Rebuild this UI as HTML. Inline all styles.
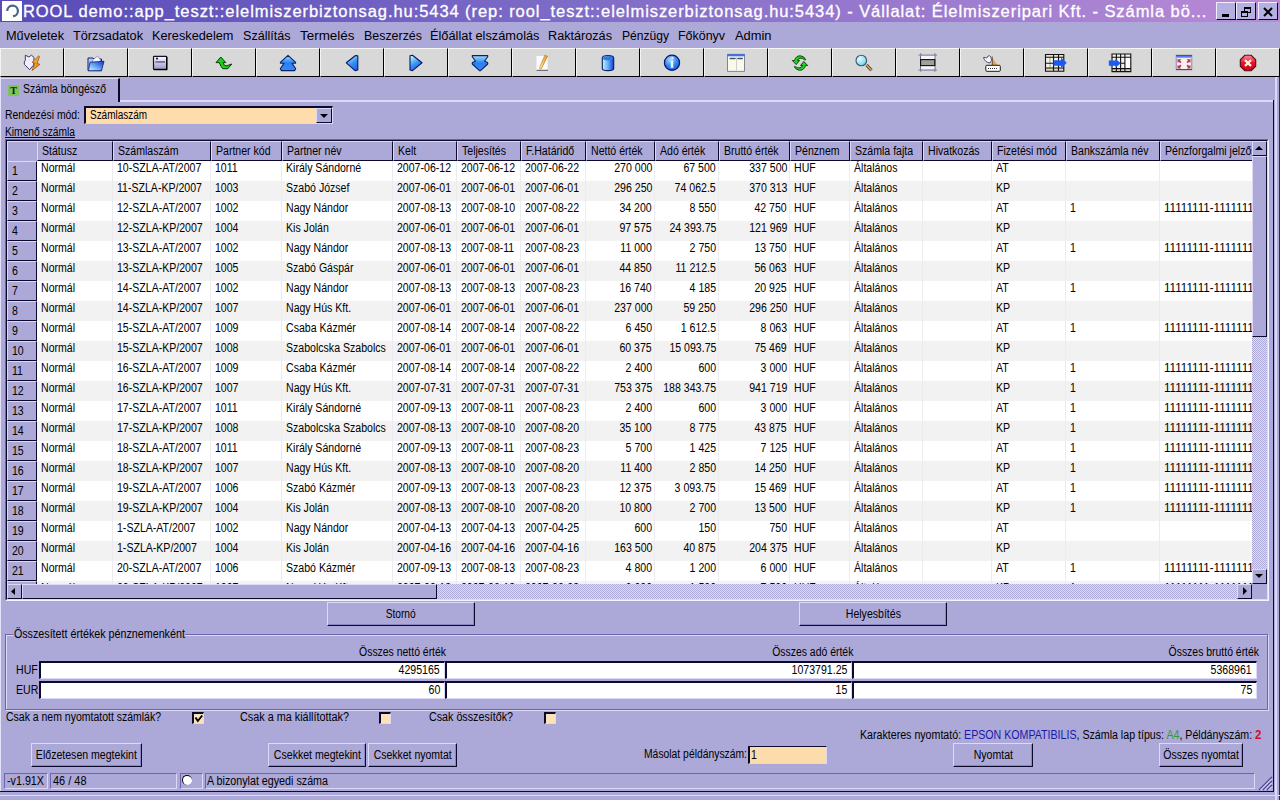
<!DOCTYPE html>
<html><head><meta charset="utf-8"><title>ROOL</title>
<style>
*{box-sizing:border-box}
html,body{margin:0;padding:0}
body{width:1280px;height:800px;overflow:hidden;position:relative;background:#aca8d8;font-family:"Liberation Sans",sans-serif;font-size:12px;color:#000}
.s{display:inline-block;transform:scaleX(var(--k,.88));transform-origin:0 0}
.r>.s{transform-origin:100% 0}
.btn{display:flex;justify-content:center}
.btn>.s{transform-origin:50% 0;flex:none}
.a{position:absolute}
.t{position:absolute;white-space:pre;line-height:13px}
.tb{position:absolute;top:48px;width:64px;height:29px;background:#d8d8d8;border-top:1px solid #f6f6f6;border-left:1px solid #f4f4f4;border-right:1px solid #000;border-bottom:1px solid #000}
.btn{position:absolute;background:#aca8d8;border-top:1px solid #dcd9f8;border-left:1px solid #dcd9f8;border-right:1px solid #0c0a2c;border-bottom:1px solid #0c0a2c;box-shadow:inset -1px -1px 0 #8a85c4;text-align:center;line-height:22px;white-space:pre}
.rh{position:absolute;left:7px;width:30px;height:20px;background:#aca8d8;border-top:1px solid #dcd9f8;border-left:1px solid #dcd9f8;border-bottom:1px solid #0c0a2c;border-right:1px solid #0c0a2c;line-height:19px;padding-left:4px}
.hc{position:absolute;top:141px;height:20px;background:#aca8d8;border-top:1px solid #dcd9f8;border-left:1px solid #dcd9f8;border-right:1px solid #0c0a2c;border-bottom:1px solid #0c0a2c;line-height:18px;padding-left:4px;white-space:pre;overflow:hidden}
.c{position:absolute;top:0;height:20px;line-height:inherit;white-space:pre;overflow:hidden;border-right:1px solid #ececf0}
.dither{background-color:#dedcf6;background-image:linear-gradient(45deg,#aca8d8 25%,transparent 25%,transparent 75%,#aca8d8 75%),linear-gradient(45deg,#aca8d8 25%,transparent 25%,transparent 75%,#aca8d8 75%);background-size:2px 2px;background-position:0 0,1px 1px}
.inp{position:absolute;background:#fff;border-top:2px solid #0c0a2c;border-left:2px solid #0c0a2c;border-bottom:1px solid #dcd9f8;border-right:1px solid #dcd9f8;text-align:right;padding-right:4px;line-height:15px;white-space:pre}
.chk{position:absolute;width:12px;height:12px;background:#fbe2b8;border-top:2px solid #0c0a2c;border-left:2px solid #0c0a2c;border-right:1px solid #dcd9f8;border-bottom:1px solid #dcd9f8}
.sp{position:absolute;top:773px;height:16px;border-top:1px solid #6a65ac;border-left:1px solid #6a65ac;border-right:1px solid #dcd9f8;border-bottom:1px solid #dcd9f8;line-height:14px;padding-left:2px;white-space:pre}
</style></head><body>

<div class="a" style="left:0;top:0;width:1280px;height:22px;background:linear-gradient(to right,#574bb8,#7e6cc8 45%,#b98ad6)"></div>
<div class="a" style="left:2px;top:1px;width:20px;height:20px;background:#fff"><svg width="20" height="20" viewBox="0 0 20 20"><path d="M5.3 10 A5.3 5.3 0 1 1 11 15.2" fill="none" stroke="#4a6488" stroke-width="2.2"/></svg></div>
<div class="t" style="left:23px;top:2px;font-size:16.5px;line-height:19px;color:#fff;letter-spacing:0.93px;-webkit-text-stroke:0.3px #fff">ROOL demo::app_teszt::elelmiszerbiztonsag.hu:5434 (rep: rool_teszt::elelmiszerbiztonsag.hu:5434) - Vállalat: Élelmiszeripari Kft. - Számla bö...</div>
<div class="a" style="left:1216px;top:2px;width:20px;height:18px;background:#b4b0e4;border-top:1px solid #f0eefc;border-left:1px solid #f0eefc;border-right:1px solid #0a0828;border-bottom:1px solid #0a0828"><div class="a" style="left:5px;top:11px;width:7px;height:3px;background:#000"></div></div>
<div class="a" style="left:1236px;top:2px;width:20px;height:18px;background:#b4b0e4;border-top:1px solid #f0eefc;border-left:1px solid #f0eefc;border-right:1px solid #0a0828;border-bottom:1px solid #0a0828"><svg class="a" style="left:2px;top:2px" width="14" height="14"><rect x="5.5" y="2.5" width="6" height="5" fill="none" stroke="#000" stroke-width="1"/><rect x="5" y="2" width="7" height="2" fill="#000"/><rect x="2.5" y="6.5" width="6" height="5" fill="#b4b0e4" stroke="#000"/><rect x="2" y="6" width="7" height="2" fill="#000"/></svg></div>
<div class="a" style="left:1258px;top:2px;width:20px;height:18px;background:#b4b0e4;border-top:1px solid #f0eefc;border-left:1px solid #f0eefc;border-right:1px solid #0a0828;border-bottom:1px solid #0a0828"><svg class="a" style="left:3px;top:3px" width="12" height="12"><path d="M2 2 L10 10 M10 2 L2 10" stroke="#000" stroke-width="2"/></svg></div>
<div class="t" style="left:6px;top:29px;font-size:12px;line-height:14px;letter-spacing:0"><span class="s" style="--k:1.0603">Műveletek</span></div>
<div class="t" style="left:73px;top:29px;font-size:12px;line-height:14px;letter-spacing:0"><span class="s" style="--k:1.0601">Törzsadatok</span></div>
<div class="t" style="left:152px;top:29px;font-size:12px;line-height:14px;letter-spacing:0"><span class="s" style="--k:1.0623">Kereskedelem</span></div>
<div class="t" style="left:243px;top:29px;font-size:12px;line-height:14px;letter-spacing:0"><span class="s" style="--k:1.0472">Szállítás</span></div>
<div class="t" style="left:300px;top:29px;font-size:12px;line-height:14px;letter-spacing:0"><span class="s" style="--k:1.1194">Termelés</span></div>
<div class="t" style="left:364px;top:29px;font-size:12px;line-height:14px;letter-spacing:0"><span class="s" style="--k:1.0351">Beszerzés</span></div>
<div class="t" style="left:430px;top:29px;font-size:12px;line-height:14px;letter-spacing:0"><span class="s" style="--k:1.0660">Élőállat elszámolás</span></div>
<div class="t" style="left:548px;top:29px;font-size:12px;line-height:14px;letter-spacing:0"><span class="s" style="--k:1.0543">Raktározás</span></div>
<div class="t" style="left:622px;top:29px;font-size:12px;line-height:14px;letter-spacing:0"><span class="s" style="--k:1.0064">Pénzügy</span></div>
<div class="t" style="left:678px;top:29px;font-size:12px;line-height:14px;letter-spacing:0"><span class="s" style="--k:1.0362">Főkönyv</span></div>
<div class="t" style="left:735px;top:29px;font-size:12px;line-height:14px;letter-spacing:0"><span class="s" style="--k:1.0730">Admin</span></div>
<div class="tb" style="left:0px"><svg class="a" style="left:19px;top:1px" width="24" height="24" viewBox="0 0 24 24"><defs><linearGradient id="g0" x1="0" y1="0" x2="1" y2="1"><stop offset="0" stop-color="#ffd040"/><stop offset="1" stop-color="#e06a10"/></linearGradient></defs>
<path d="M5.3 5.2 L5.3 10.5 L4.2 12 L4.5 14.6 L9.6 19.7 L13.7 15 L14 7.4 L11.4 5.2 L9 7 Z" fill="#eeedfb" stroke="#3c3c70" stroke-width="1"/>
<path d="M18.8 5.8 L12 12.3 L14.8 13 L12 20.6 L20 14.3 L17 13.4 L19.6 6.5 Z" fill="url(#g0)" stroke="#9a4a10" stroke-width="0.7"/></svg></div>
<div class="tb" style="left:64px"><svg class="a" style="left:19px;top:1px" width="24" height="24" viewBox="0 0 24 24"><defs><linearGradient id="g1" x1="0" y1="1" x2="1" y2="0"><stop offset="0" stop-color="#d8fcff"/><stop offset="0.45" stop-color="#6aa8f0"/><stop offset="1" stop-color="#0a30c8"/></linearGradient></defs>
<path d="M4 8 L9 8 L10 9 L17.5 9 L17.5 20.7 L4 20.7 Z" fill="#a8d0f8" stroke="#14206a" stroke-width="1"/>
<path d="M8.5 10 L13.7 6 L16.5 10 L16 13 L9 13 Z" fill="#f4f4ff" stroke="#6a6aa0" stroke-width="0.6"/>
<path d="M6 12.2 L20 11.2 L17.5 20.7 L4.5 20.7 Z" fill="url(#g1)" stroke="#0a1a80" stroke-width="0.8"/></svg></div>
<div class="tb" style="left:128px"><svg class="a" style="left:19px;top:1px" width="24" height="24" viewBox="0 0 24 24"><defs><linearGradient id="g2" x1="0" y1="0" x2="0" y2="1"><stop offset="0" stop-color="#ffffff"/><stop offset="0.5" stop-color="#c8c8e8"/><stop offset="1" stop-color="#9a9ac8"/></linearGradient></defs>
<rect x="5.5" y="6.3" width="13.2" height="13.2" rx="0.8" fill="url(#g2)" stroke="#10102a" stroke-width="1.2"/>
<rect x="7.5" y="11.3" width="9.5" height="1.3" fill="#50507a"/>
<circle cx="9" cy="8.6" r="1.1" fill="#20203a"/>
<path d="M18.7 7 L18.7 19.5 L6 19.5" fill="none" stroke="#000" stroke-width="1.4"/></svg></div>
<div class="tb" style="left:192px"><svg class="a" style="left:19px;top:1px" width="24" height="24" viewBox="0 0 24 24"><path d="M8.8 7 L4 12.6 L7.3 12.6 Q9 17 10.8 18.7 L15.8 18.7 L19.8 14 L17.8 14.6 Q14.5 16.6 12.8 15.5 Q11.6 14.2 11 12.6 L13.8 12.6 Z" fill="#1cd01c" stroke="#063a06" stroke-width="1"/></svg></div>
<div class="tb" style="left:256px"><svg class="a" style="left:19px;top:1px" width="24" height="24" viewBox="0 0 24 24"><defs><linearGradient id="g4" x1="0" y1="0" x2="0" y2="1"><stop offset="0" stop-color="#a0e0ff"/><stop offset="0.5" stop-color="#2a80f0"/><stop offset="1" stop-color="#3a8af8"/></linearGradient></defs>
<path d="M12 5.3 L4.3 12.3 L4.6 13.3 L8 13.3 L4.3 18.8 L5.3 20.6 L18.7 20.6 L19.7 18.8 L16 13.3 L19.4 13.3 L19.7 12.3 Z" fill="url(#g4)" stroke="#08206a" stroke-width="1.1" stroke-linejoin="round"/></svg></div>
<div class="tb" style="left:320px"><svg class="a" style="left:19px;top:1px" width="24" height="24" viewBox="0 0 24 24"><defs><linearGradient id="g5" x1="0.3" y1="0" x2="0.8" y2="1"><stop offset="0" stop-color="#b0f0ff"/><stop offset="0.5" stop-color="#3a90f0"/><stop offset="1" stop-color="#1a60e0"/></linearGradient></defs>
<path d="M6.3 12.8 L15.5 5.5 L17.8 5.8 L17.8 20 L15 20.6 Z" fill="url(#g5)" stroke="#06186a" stroke-width="1.1" stroke-linejoin="round"/></svg></div>
<div class="tb" style="left:384px"><svg class="a" style="left:19px;top:1px" width="24" height="24" viewBox="0 0 24 24"><path d="M6 5.8 L8.5 5.3 L18 12.8 L8.5 20.6 L6 20 Z" fill="url(#g5)" stroke="#06186a" stroke-width="1.1" stroke-linejoin="round"/></svg></div>
<div class="tb" style="left:448px"><svg class="a" style="left:19px;top:1px" width="24" height="24" viewBox="0 0 24 24"><path d="M4.3 5.6 L19.7 5.6 L19.7 6.8 L16.5 11.3 L19.7 12.5 L19.7 14 L12.5 20.6 L11.5 20.6 L4.3 14 L4.3 12.5 L7.5 11.3 L4.3 6.8 Z" fill="url(#g4)" stroke="#08206a" stroke-width="1.1" stroke-linejoin="round"/></svg></div>
<div class="tb" style="left:512px"><svg class="a" style="left:19px;top:1px" width="24" height="24" viewBox="0 0 24 24"><defs><linearGradient id="g8" x1="0" y1="0" x2="1" y2="0"><stop offset="0" stop-color="#fff0a0"/><stop offset="1" stop-color="#e08a10"/></linearGradient></defs>
<rect x="4.5" y="6" width="11" height="14.5" fill="#fbfbff"/>
<rect x="4.5" y="19.8" width="11.5" height="1" fill="#505060"/>
<path d="M12.8 5.2 L15.5 6.2 L9.5 18.6 L7.8 19 L7.8 16.8 Z" fill="url(#g8)" stroke="#b06010" stroke-width="0.5"/></svg></div>
<div class="tb" style="left:576px"><svg class="a" style="left:19px;top:1px" width="24" height="24" viewBox="0 0 24 24"><defs><linearGradient id="g9" x1="0" y1="0" x2="1" y2="0"><stop offset="0" stop-color="#c0f4ff"/><stop offset="0.5" stop-color="#6ab0f0"/><stop offset="1" stop-color="#0a3ad0"/></linearGradient></defs>
<path d="M6.3 8 Q6.3 5.5 12 5.5 Q17.7 5.5 17.7 8 L17.7 18.5 Q17.7 20.6 12 20.6 Q6.3 20.6 6.3 18.5 Z" fill="url(#g9)" stroke="#08206a" stroke-width="1.1"/>
<ellipse cx="12" cy="8.3" rx="5" ry="2" fill="#2a7ae8"/></svg></div>
<div class="tb" style="left:640px"><svg class="a" style="left:19px;top:1px" width="24" height="24" viewBox="0 0 24 24"><defs><radialGradient id="g10" cx="0.4" cy="0.3" r="0.8"><stop offset="0" stop-color="#b0e0ff"/><stop offset="0.5" stop-color="#3a88f0"/><stop offset="1" stop-color="#1050d0"/></radialGradient></defs>
<circle cx="12" cy="12.8" r="7.6" fill="url(#g10)" stroke="#06186a" stroke-width="1.2"/>
<path d="M10.6 11 L13.2 10.3 L13.2 17.2 L14 17.8 L10 17.8 L10.8 17.2 L10.8 11.8 Z" fill="#e8faff"/>
<circle cx="12.4" cy="8.2" r="1.1" fill="#e8faff"/></svg></div>
<div class="tb" style="left:704px"><svg class="a" style="left:19px;top:1px" width="24" height="24" viewBox="0 0 24 24"><rect x="3.6" y="4.3" width="16.8" height="17" fill="#fafaea" stroke="#6a6a8a" stroke-width="0.8"/>
<rect x="3.3" y="4" width="17.4" height="2.3" fill="#4a70d8"/>
<rect x="5.5" y="7.8" width="6.3" height="1.4" rx="0.7" fill="#3a5a6a"/>
<rect x="13.2" y="7.8" width="5.8" height="1.4" rx="0.7" fill="#3a5a6a"/>
<rect x="12.1" y="7" width="0.6" height="13.5" fill="#b0b0b8"/></svg></div>
<div class="tb" style="left:768px"><svg class="a" style="left:19px;top:1px" width="24" height="24" viewBox="0 0 24 24"><path d="M4.3 10.5 L6.5 10.5 Q8 5.5 12.5 5.8 Q16 6 17.8 9.8 L16.5 9.8 Q14.5 7.8 12 8.2 Q10 8.7 9.5 10.5 L11.5 10.5 L8.2 14.6 Z" fill="#22d022" stroke="#063a06" stroke-width="0.9" stroke-linejoin="round"/>
<path d="M19.7 15.5 L17.5 15.5 Q16 20.5 11.5 20.3 Q8 20 6.3 16.7 L7.5 16.7 Q9.5 18.3 12 17.8 Q14 17.3 14.5 15.5 L12.5 15.5 L15.8 11.5 Z" fill="#22d022" stroke="#063a06" stroke-width="0.9" stroke-linejoin="round"/></svg></div>
<div class="tb" style="left:832px"><svg class="a" style="left:19px;top:1px" width="24" height="24" viewBox="0 0 24 24"><defs><radialGradient id="g13" cx="0.35" cy="0.35" r="0.8"><stop offset="0" stop-color="#e0fcff"/><stop offset="1" stop-color="#70c8f0"/></radialGradient></defs>
<path d="M14.5 15 L19.5 20.3" stroke="#3a2a10" stroke-width="3"/>
<path d="M14.5 15 L19.5 20.3" stroke="#e8b060" stroke-width="1.4"/>
<circle cx="9.3" cy="10.5" r="5.3" fill="url(#g13)" stroke="#3a5a70" stroke-width="1.1"/></svg></div>
<div class="tb" style="left:896px"><svg class="a" style="left:19px;top:1px" width="24" height="24" viewBox="0 0 24 24"><rect x="4" y="3.5" width="1.3" height="18" fill="#6a6a8a"/>
<rect x="18.2" y="3.5" width="1.3" height="18" fill="#6a6a8a"/>
<rect x="2.5" y="4.5" width="18.5" height="1.2" fill="#8a8aa8"/>
<rect x="2.5" y="19.5" width="18.5" height="1.2" fill="#8a8aa8"/>
<rect x="5" y="6" width="13.5" height="3" fill="#f4f4fc"/>
<rect x="5" y="16" width="13.5" height="3" fill="#f4f4fc"/>
<rect x="4.6" y="9.6" width="14.2" height="6" fill="#a0a098" stroke="#101010" stroke-width="1.1"/></svg></div>
<div class="tb" style="left:960px"><svg class="a" style="left:19px;top:1px" width="24" height="24" viewBox="0 0 24 24"><path d="M12 7.5 L17.5 15 L12 15 Z" fill="#f0a040"/>
<path d="M12.3 6.5 L12.3 15" stroke="#404050" stroke-width="0.8"/>
<path d="M3.5 7.5 Q5 12.5 10 13 Q12.5 11 11 7 Q9.5 4.5 7.5 6.5 Q7 9 5.5 7.5 Z" fill="#f4f4f8" stroke="#404050" stroke-width="0.9"/>
<rect x="5.8" y="15.3" width="14.5" height="6" rx="1" fill="#fff" stroke="#1a1a1a" stroke-width="1"/>
<path d="M8 18.5 h1 M10 18.5 h1 M12 18.5 h1 M14 18.5 h1 M16 18.5 h1" stroke="#303030" stroke-width="1"/></svg></div>
<div class="tb" style="left:1024px"><svg class="a" style="left:19px;top:1px" width="24" height="24" viewBox="0 0 24 24"><rect x="1.5" y="4.5" width="18.3" height="16.8" fill="#f2f2ea"/>
<rect x="1.5" y="4.5" width="18.3" height="2.8" fill="#e8e4d0"/>
<rect x="1.5" y="18" width="18.3" height="3.3" fill="#d8d4c0"/>
<path d="M6 7.3 V18" stroke="#a0a090" stroke-width="1"/>
<path d="M1.5 4.5 H19.8 V21.3 H1.5 Z M1.5 7.3 H19.8 M1.5 13.3 H10 M1.5 18 H19.8 M9.5 4.5 V21.3 M14.5 4.5 V21.3" fill="none" stroke="#101010" stroke-width="1.1"/>
<path d="M9.5 10.3 L17 10.3 L17 7.5 L22.8 12.8 L17 18.3 L17 15.8 L9.5 15.8 Z" fill="#1a5af4"/></svg></div>
<div class="tb" style="left:1088px"><svg class="a" style="left:19px;top:1px" width="24" height="24" viewBox="0 0 24 24"><rect x="4" y="4" width="18.8" height="17.6" fill="#f2f2ea"/>
<rect x="17" y="7.5" width="5.5" height="11" fill="#ffffff"/>
<rect x="4" y="18.6" width="18.8" height="3" fill="#d8d4c0"/>
<path d="M4 4 H22.8 V21.6 H4 Z M4 7.2 H22.8 M12.6 13.2 H17 M4 18.6 H22.8 M8.4 4 V21.6 M12.6 4 V21.6 M16.9 4 V21.6" fill="none" stroke="#101010" stroke-width="1.1"/>
<path d="M0.8 10.6 L7.5 10.6 L7.5 8.8 L12.8 13.2 L7.5 17.6 L7.5 15.8 L0.8 15.8 Z" fill="#1a5af4"/></svg></div>
<div class="tb" style="left:1152px"><svg class="a" style="left:19px;top:1px" width="24" height="24" viewBox="0 0 24 24"><defs><linearGradient id="g18" x1="0" y1="0" x2="0" y2="1"><stop offset="0" stop-color="#1a3ac8"/><stop offset="1" stop-color="#a0c8f8"/></linearGradient></defs>
<rect x="4.2" y="5.2" width="15.6" height="14.6" fill="#fdf0f4" stroke="#7a6aa8" stroke-width="0.8"/>
<rect x="4" y="5" width="16" height="3.2" fill="url(#g18)"/>
<path d="M5.5 9.3 L9.3 9.3 L8 10.6 L9.5 12 L8.2 13.2 L6.8 11.8 L5.5 13 Z M18.5 9.3 L14.7 9.3 L16 10.6 L14.5 12 L15.8 13.2 L17.2 11.8 L18.5 13 Z M5.5 18.5 L9.3 18.5 L8 17.2 L9.5 15.8 L8.2 14.6 L6.8 16 L5.5 14.8 Z M18.5 18.5 L14.7 18.5 L16 17.2 L14.5 15.8 L15.8 14.6 L17.2 16 L18.5 14.8 Z" fill="#b83848"/>
<rect x="4" y="19" width="16" height="1" fill="#5a3a8a"/></svg></div>
<div class="tb" style="left:1216px"><svg class="a" style="left:19px;top:1px" width="24" height="24" viewBox="0 0 24 24"><defs><linearGradient id="g19" x1="0" y1="0" x2="0" y2="1"><stop offset="0" stop-color="#ff8a9a"/><stop offset="0.5" stop-color="#e81020"/><stop offset="1" stop-color="#c80818"/></linearGradient></defs>
<path d="M8.8 5.3 L15.2 5.3 L19.7 9.8 L19.7 16.2 L15.2 20.7 L8.8 20.7 L4.3 16.2 L4.3 9.8 Z" fill="url(#g19)" stroke="#5a0810" stroke-width="1.1"/>
<path d="M9 10 L15 16 M15 10 L9 16" stroke="#fff4e8" stroke-width="2.4"/></svg></div>
<div class="a" style="left:0;top:78px;width:120px;height:24px;background:#aca8d8;border-top:1px solid #dcd9f8;border-left:1px solid #dcd9f8;border-right:2px solid #0c0a2c"></div>
<div class="a" style="left:120px;top:100px;width:1153px;height:2px;background:#dcd9f8"></div>
<div class="a" style="left:8px;top:85px;width:11px;height:11px;background:#7cc45a;border-radius:1px"><div class="t" style="left:0;top:0;width:11px;text-align:center;font-family:'Liberation Serif',serif;font-weight:bold;font-size:10px;line-height:11px;color:#102010;letter-spacing:0">T</div></div>
<div class="t" style="left:23px;top:83px;"><span class="s" style="--k:0.8701">Számla böngésző</span></div>
<div class="a" style="left:1273px;top:100px;width:1px;height:692px;background:#0c0a2c"></div>
<div class="a" style="left:0px;top:77px;width:1px;height:715px;background:#e4e2fa"></div>
<div class="a" style="left:0px;top:791px;width:1274px;height:1px;background:#0c0a2c"></div>
<div class="a" style="left:1275px;top:77px;width:2px;height:723px;background:#dcd9f8"></div>
<div class="a" style="left:1279px;top:77px;width:1px;height:723px;background:#2a2660"></div>
<div class="a" style="left:0px;top:795px;width:1280px;height:1px;background:#dcd9f8"></div>
<div class="t" style="left:5px;top:109px;"><span class="s" style="--k:0.8649">Rendezési mód:</span></div>
<div class="a" style="left:84px;top:106px;width:249px;height:18px;background:#fedcab;border-top:2px solid #0c0a2c;border-left:2px solid #0c0a2c;border-right:1px solid #dcd9f8;border-bottom:1px solid #dcd9f8"></div>
<div class="t" style="left:90px;top:109px"><span class="s" style="--k:0.8298">Számlaszám</span></div>
<div class="btn" style="left:316px;top:108px;width:16px;height:15px;box-shadow:none"><svg class="a" style="left:3px;top:5px" width="9" height="5"><path d="M0 0 L8 0 L4 4 Z" fill="#000"/></svg></div>
<div class="t" style="left:5px;top:126px"><span class="s" style="--k:0.8533"><u>Kimenő számla</u></span></div>
<div class="a" style="left:5px;top:139px;width:1264px;height:462px;border-top:1px solid #6a65ac;border-left:1px solid #6a65ac;border-right:1px solid #f4f2ff;border-bottom:1px solid #f4f2ff"></div>
<div class="a" style="left:6px;top:140px;width:1262px;height:460px;border-top:1px solid #0c0a2c;border-left:1px solid #0c0a2c;border-right:1px solid #dcd9f8;border-bottom:1px solid #dcd9f8;background:#fff"></div>
<div class="a" style="left:7px;top:141px;width:30px;height:20px;background:#aca8d8;border-top:1px solid #dcd9f8;border-left:1px solid #dcd9f8"></div>
<div class="a" style="left:37px;top:141px;width:1215px;height:20px;overflow:hidden">
<div class="hc" style="left:0px;top:0;width:76px"><span class="s" style="--k:0.88">Státusz</span></div>
<div class="hc" style="left:76px;top:0;width:98px"><span class="s" style="--k:0.88">Számlaszám</span></div>
<div class="hc" style="left:174px;top:0;width:71px"><span class="s" style="--k:0.88">Partner kód</span></div>
<div class="hc" style="left:245px;top:0;width:111px"><span class="s" style="--k:0.88">Partner név</span></div>
<div class="hc" style="left:356px;top:0;width:64px"><span class="s" style="--k:0.88">Kelt</span></div>
<div class="hc" style="left:420px;top:0;width:64px"><span class="s" style="--k:0.88">Teljesítés</span></div>
<div class="hc" style="left:484px;top:0;width:65px"><span class="s" style="--k:0.88">F.Határidő</span></div>
<div class="hc" style="left:549px;top:0;width:69px"><span class="s" style="--k:0.88">Nettó érték</span></div>
<div class="hc" style="left:618px;top:0;width:64px"><span class="s" style="--k:0.88">Adó érték</span></div>
<div class="hc" style="left:682px;top:0;width:71px"><span class="s" style="--k:0.88">Bruttó érték</span></div>
<div class="hc" style="left:753px;top:0;width:60px"><span class="s" style="--k:0.88">Pénznem</span></div>
<div class="hc" style="left:813px;top:0;width:73px"><span class="s" style="--k:0.88">Számla fajta</span></div>
<div class="hc" style="left:886px;top:0;width:69px"><span class="s" style="--k:0.88">Hivatkozás</span></div>
<div class="hc" style="left:955px;top:0;width:74px"><span class="s" style="--k:0.88">Fizetési mód</span></div>
<div class="hc" style="left:1029px;top:0;width:94px"><span class="s" style="--k:0.88">Bankszámla név</span></div>
<div class="hc" style="left:1123px;top:0;width:141px"><span class="s" style="--k:0.88">Pénzforgalmi jelzőszám</span></div>
</div>
<div class="a" style="left:37px;top:161px;width:1215px;height:20px;background:#ffffff;overflow:hidden;line-height:14px">
<div class="c" style="left:0px;width:76px;padding-left:4px"><span class="s" style="--k:0.88">Normál</span></div>
<div class="c" style="left:76px;width:98px;padding-left:4px"><span class="s" style="--k:0.88">10-SZLA-AT/2007</span></div>
<div class="c" style="left:174px;width:71px;padding-left:4px"><span class="s" style="--k:0.88">1011</span></div>
<div class="c" style="left:245px;width:111px;padding-left:4px"><span class="s" style="--k:0.88">Király Sándorné</span></div>
<div class="c" style="left:356px;width:64px;padding-left:4px"><span class="s" style="--k:0.88">2007-06-12</span></div>
<div class="c" style="left:420px;width:64px;padding-left:4px"><span class="s" style="--k:0.88">2007-06-12</span></div>
<div class="c" style="left:484px;width:65px;padding-left:4px"><span class="s" style="--k:0.88">2007-06-22</span></div>
<div class="c r" style="left:549px;width:69px;text-align:right;padding-right:2px"><span class="s" style="--k:0.88">270 000</span></div>
<div class="c r" style="left:618px;width:64px;text-align:right;padding-right:2px"><span class="s" style="--k:0.88">67 500</span></div>
<div class="c r" style="left:682px;width:71px;text-align:right;padding-right:2px"><span class="s" style="--k:0.88">337 500</span></div>
<div class="c" style="left:753px;width:60px;padding-left:4px"><span class="s" style="--k:0.88">HUF</span></div>
<div class="c" style="left:813px;width:73px;padding-left:4px"><span class="s" style="--k:0.88">Általános</span></div>
<div class="c" style="left:886px;width:69px;padding-left:4px"><span class="s" style="--k:0.88"></span></div>
<div class="c" style="left:955px;width:74px;padding-left:4px"><span class="s" style="--k:0.88">AT</span></div>
<div class="c" style="left:1029px;width:94px;padding-left:4px"><span class="s" style="--k:0.88"></span></div>
<div class="c" style="left:1123px;width:141px;padding-left:4px"><span class="s" style="--k:0.88"></span></div>
</div>
<div class="rh" style="top:161px;height:20px;"><span class="s" style="--k:0.88">1</span></div>
<div class="a" style="left:37px;top:181px;width:1215px;height:20px;background:#f2f2f2;overflow:hidden;line-height:14px">
<div class="c" style="left:0px;width:76px;padding-left:4px"><span class="s" style="--k:0.88">Normál</span></div>
<div class="c" style="left:76px;width:98px;padding-left:4px"><span class="s" style="--k:0.88">11-SZLA-KP/2007</span></div>
<div class="c" style="left:174px;width:71px;padding-left:4px"><span class="s" style="--k:0.88">1003</span></div>
<div class="c" style="left:245px;width:111px;padding-left:4px"><span class="s" style="--k:0.88">Szabó József</span></div>
<div class="c" style="left:356px;width:64px;padding-left:4px"><span class="s" style="--k:0.88">2007-06-01</span></div>
<div class="c" style="left:420px;width:64px;padding-left:4px"><span class="s" style="--k:0.88">2007-06-01</span></div>
<div class="c" style="left:484px;width:65px;padding-left:4px"><span class="s" style="--k:0.88">2007-06-01</span></div>
<div class="c r" style="left:549px;width:69px;text-align:right;padding-right:2px"><span class="s" style="--k:0.88">296 250</span></div>
<div class="c r" style="left:618px;width:64px;text-align:right;padding-right:2px"><span class="s" style="--k:0.88">74 062.5</span></div>
<div class="c r" style="left:682px;width:71px;text-align:right;padding-right:2px"><span class="s" style="--k:0.88">370 313</span></div>
<div class="c" style="left:753px;width:60px;padding-left:4px"><span class="s" style="--k:0.88">HUF</span></div>
<div class="c" style="left:813px;width:73px;padding-left:4px"><span class="s" style="--k:0.88">Általános</span></div>
<div class="c" style="left:886px;width:69px;padding-left:4px"><span class="s" style="--k:0.88"></span></div>
<div class="c" style="left:955px;width:74px;padding-left:4px"><span class="s" style="--k:0.88">KP</span></div>
<div class="c" style="left:1029px;width:94px;padding-left:4px"><span class="s" style="--k:0.88"></span></div>
<div class="c" style="left:1123px;width:141px;padding-left:4px"><span class="s" style="--k:0.88"></span></div>
</div>
<div class="rh" style="top:181px;height:20px;"><span class="s" style="--k:0.88">2</span></div>
<div class="a" style="left:37px;top:201px;width:1215px;height:20px;background:#ffffff;overflow:hidden;line-height:14px">
<div class="c" style="left:0px;width:76px;padding-left:4px"><span class="s" style="--k:0.88">Normál</span></div>
<div class="c" style="left:76px;width:98px;padding-left:4px"><span class="s" style="--k:0.88">12-SZLA-AT/2007</span></div>
<div class="c" style="left:174px;width:71px;padding-left:4px"><span class="s" style="--k:0.88">1002</span></div>
<div class="c" style="left:245px;width:111px;padding-left:4px"><span class="s" style="--k:0.88">Nagy Nándor</span></div>
<div class="c" style="left:356px;width:64px;padding-left:4px"><span class="s" style="--k:0.88">2007-08-13</span></div>
<div class="c" style="left:420px;width:64px;padding-left:4px"><span class="s" style="--k:0.88">2007-08-10</span></div>
<div class="c" style="left:484px;width:65px;padding-left:4px"><span class="s" style="--k:0.88">2007-08-22</span></div>
<div class="c r" style="left:549px;width:69px;text-align:right;padding-right:2px"><span class="s" style="--k:0.88">34 200</span></div>
<div class="c r" style="left:618px;width:64px;text-align:right;padding-right:2px"><span class="s" style="--k:0.88">8 550</span></div>
<div class="c r" style="left:682px;width:71px;text-align:right;padding-right:2px"><span class="s" style="--k:0.88">42 750</span></div>
<div class="c" style="left:753px;width:60px;padding-left:4px"><span class="s" style="--k:0.88">HUF</span></div>
<div class="c" style="left:813px;width:73px;padding-left:4px"><span class="s" style="--k:0.88">Általános</span></div>
<div class="c" style="left:886px;width:69px;padding-left:4px"><span class="s" style="--k:0.88"></span></div>
<div class="c" style="left:955px;width:74px;padding-left:4px"><span class="s" style="--k:0.88">AT</span></div>
<div class="c" style="left:1029px;width:94px;padding-left:4px"><span class="s" style="--k:0.88">1</span></div>
<div class="c" style="left:1123px;width:141px;padding-left:4px"><span class="s" style="--k:0.97">11111111-11111111</span></div>
</div>
<div class="rh" style="top:201px;height:20px;"><span class="s" style="--k:0.88">3</span></div>
<div class="a" style="left:37px;top:221px;width:1215px;height:20px;background:#f2f2f2;overflow:hidden;line-height:14px">
<div class="c" style="left:0px;width:76px;padding-left:4px"><span class="s" style="--k:0.88">Normál</span></div>
<div class="c" style="left:76px;width:98px;padding-left:4px"><span class="s" style="--k:0.88">12-SZLA-KP/2007</span></div>
<div class="c" style="left:174px;width:71px;padding-left:4px"><span class="s" style="--k:0.88">1004</span></div>
<div class="c" style="left:245px;width:111px;padding-left:4px"><span class="s" style="--k:0.88">Kis Jolán</span></div>
<div class="c" style="left:356px;width:64px;padding-left:4px"><span class="s" style="--k:0.88">2007-06-01</span></div>
<div class="c" style="left:420px;width:64px;padding-left:4px"><span class="s" style="--k:0.88">2007-06-01</span></div>
<div class="c" style="left:484px;width:65px;padding-left:4px"><span class="s" style="--k:0.88">2007-06-01</span></div>
<div class="c r" style="left:549px;width:69px;text-align:right;padding-right:2px"><span class="s" style="--k:0.88">97 575</span></div>
<div class="c r" style="left:618px;width:64px;text-align:right;padding-right:2px"><span class="s" style="--k:0.88">24 393.75</span></div>
<div class="c r" style="left:682px;width:71px;text-align:right;padding-right:2px"><span class="s" style="--k:0.88">121 969</span></div>
<div class="c" style="left:753px;width:60px;padding-left:4px"><span class="s" style="--k:0.88">HUF</span></div>
<div class="c" style="left:813px;width:73px;padding-left:4px"><span class="s" style="--k:0.88">Általános</span></div>
<div class="c" style="left:886px;width:69px;padding-left:4px"><span class="s" style="--k:0.88"></span></div>
<div class="c" style="left:955px;width:74px;padding-left:4px"><span class="s" style="--k:0.88">KP</span></div>
<div class="c" style="left:1029px;width:94px;padding-left:4px"><span class="s" style="--k:0.88"></span></div>
<div class="c" style="left:1123px;width:141px;padding-left:4px"><span class="s" style="--k:0.88"></span></div>
</div>
<div class="rh" style="top:221px;height:20px;"><span class="s" style="--k:0.88">4</span></div>
<div class="a" style="left:37px;top:241px;width:1215px;height:20px;background:#ffffff;overflow:hidden;line-height:14px">
<div class="c" style="left:0px;width:76px;padding-left:4px"><span class="s" style="--k:0.88">Normál</span></div>
<div class="c" style="left:76px;width:98px;padding-left:4px"><span class="s" style="--k:0.88">13-SZLA-AT/2007</span></div>
<div class="c" style="left:174px;width:71px;padding-left:4px"><span class="s" style="--k:0.88">1002</span></div>
<div class="c" style="left:245px;width:111px;padding-left:4px"><span class="s" style="--k:0.88">Nagy Nándor</span></div>
<div class="c" style="left:356px;width:64px;padding-left:4px"><span class="s" style="--k:0.88">2007-08-13</span></div>
<div class="c" style="left:420px;width:64px;padding-left:4px"><span class="s" style="--k:0.88">2007-08-11</span></div>
<div class="c" style="left:484px;width:65px;padding-left:4px"><span class="s" style="--k:0.88">2007-08-23</span></div>
<div class="c r" style="left:549px;width:69px;text-align:right;padding-right:2px"><span class="s" style="--k:0.88">11 000</span></div>
<div class="c r" style="left:618px;width:64px;text-align:right;padding-right:2px"><span class="s" style="--k:0.88">2 750</span></div>
<div class="c r" style="left:682px;width:71px;text-align:right;padding-right:2px"><span class="s" style="--k:0.88">13 750</span></div>
<div class="c" style="left:753px;width:60px;padding-left:4px"><span class="s" style="--k:0.88">HUF</span></div>
<div class="c" style="left:813px;width:73px;padding-left:4px"><span class="s" style="--k:0.88">Általános</span></div>
<div class="c" style="left:886px;width:69px;padding-left:4px"><span class="s" style="--k:0.88"></span></div>
<div class="c" style="left:955px;width:74px;padding-left:4px"><span class="s" style="--k:0.88">AT</span></div>
<div class="c" style="left:1029px;width:94px;padding-left:4px"><span class="s" style="--k:0.88">1</span></div>
<div class="c" style="left:1123px;width:141px;padding-left:4px"><span class="s" style="--k:0.97">11111111-11111111</span></div>
</div>
<div class="rh" style="top:241px;height:20px;"><span class="s" style="--k:0.88">5</span></div>
<div class="a" style="left:37px;top:261px;width:1215px;height:20px;background:#f2f2f2;overflow:hidden;line-height:14px">
<div class="c" style="left:0px;width:76px;padding-left:4px"><span class="s" style="--k:0.88">Normál</span></div>
<div class="c" style="left:76px;width:98px;padding-left:4px"><span class="s" style="--k:0.88">13-SZLA-KP/2007</span></div>
<div class="c" style="left:174px;width:71px;padding-left:4px"><span class="s" style="--k:0.88">1005</span></div>
<div class="c" style="left:245px;width:111px;padding-left:4px"><span class="s" style="--k:0.88">Szabó Gáspár</span></div>
<div class="c" style="left:356px;width:64px;padding-left:4px"><span class="s" style="--k:0.88">2007-06-01</span></div>
<div class="c" style="left:420px;width:64px;padding-left:4px"><span class="s" style="--k:0.88">2007-06-01</span></div>
<div class="c" style="left:484px;width:65px;padding-left:4px"><span class="s" style="--k:0.88">2007-06-01</span></div>
<div class="c r" style="left:549px;width:69px;text-align:right;padding-right:2px"><span class="s" style="--k:0.88">44 850</span></div>
<div class="c r" style="left:618px;width:64px;text-align:right;padding-right:2px"><span class="s" style="--k:0.88">11 212.5</span></div>
<div class="c r" style="left:682px;width:71px;text-align:right;padding-right:2px"><span class="s" style="--k:0.88">56 063</span></div>
<div class="c" style="left:753px;width:60px;padding-left:4px"><span class="s" style="--k:0.88">HUF</span></div>
<div class="c" style="left:813px;width:73px;padding-left:4px"><span class="s" style="--k:0.88">Általános</span></div>
<div class="c" style="left:886px;width:69px;padding-left:4px"><span class="s" style="--k:0.88"></span></div>
<div class="c" style="left:955px;width:74px;padding-left:4px"><span class="s" style="--k:0.88">KP</span></div>
<div class="c" style="left:1029px;width:94px;padding-left:4px"><span class="s" style="--k:0.88"></span></div>
<div class="c" style="left:1123px;width:141px;padding-left:4px"><span class="s" style="--k:0.88"></span></div>
</div>
<div class="rh" style="top:261px;height:20px;"><span class="s" style="--k:0.88">6</span></div>
<div class="a" style="left:37px;top:281px;width:1215px;height:20px;background:#ffffff;overflow:hidden;line-height:14px">
<div class="c" style="left:0px;width:76px;padding-left:4px"><span class="s" style="--k:0.88">Normál</span></div>
<div class="c" style="left:76px;width:98px;padding-left:4px"><span class="s" style="--k:0.88">14-SZLA-AT/2007</span></div>
<div class="c" style="left:174px;width:71px;padding-left:4px"><span class="s" style="--k:0.88">1002</span></div>
<div class="c" style="left:245px;width:111px;padding-left:4px"><span class="s" style="--k:0.88">Nagy Nándor</span></div>
<div class="c" style="left:356px;width:64px;padding-left:4px"><span class="s" style="--k:0.88">2007-08-13</span></div>
<div class="c" style="left:420px;width:64px;padding-left:4px"><span class="s" style="--k:0.88">2007-08-13</span></div>
<div class="c" style="left:484px;width:65px;padding-left:4px"><span class="s" style="--k:0.88">2007-08-23</span></div>
<div class="c r" style="left:549px;width:69px;text-align:right;padding-right:2px"><span class="s" style="--k:0.88">16 740</span></div>
<div class="c r" style="left:618px;width:64px;text-align:right;padding-right:2px"><span class="s" style="--k:0.88">4 185</span></div>
<div class="c r" style="left:682px;width:71px;text-align:right;padding-right:2px"><span class="s" style="--k:0.88">20 925</span></div>
<div class="c" style="left:753px;width:60px;padding-left:4px"><span class="s" style="--k:0.88">HUF</span></div>
<div class="c" style="left:813px;width:73px;padding-left:4px"><span class="s" style="--k:0.88">Általános</span></div>
<div class="c" style="left:886px;width:69px;padding-left:4px"><span class="s" style="--k:0.88"></span></div>
<div class="c" style="left:955px;width:74px;padding-left:4px"><span class="s" style="--k:0.88">AT</span></div>
<div class="c" style="left:1029px;width:94px;padding-left:4px"><span class="s" style="--k:0.88">1</span></div>
<div class="c" style="left:1123px;width:141px;padding-left:4px"><span class="s" style="--k:0.97">11111111-11111111</span></div>
</div>
<div class="rh" style="top:281px;height:20px;"><span class="s" style="--k:0.88">7</span></div>
<div class="a" style="left:37px;top:301px;width:1215px;height:20px;background:#f2f2f2;overflow:hidden;line-height:14px">
<div class="c" style="left:0px;width:76px;padding-left:4px"><span class="s" style="--k:0.88">Normál</span></div>
<div class="c" style="left:76px;width:98px;padding-left:4px"><span class="s" style="--k:0.88">14-SZLA-KP/2007</span></div>
<div class="c" style="left:174px;width:71px;padding-left:4px"><span class="s" style="--k:0.88">1007</span></div>
<div class="c" style="left:245px;width:111px;padding-left:4px"><span class="s" style="--k:0.88">Nagy Hús Kft.</span></div>
<div class="c" style="left:356px;width:64px;padding-left:4px"><span class="s" style="--k:0.88">2007-06-01</span></div>
<div class="c" style="left:420px;width:64px;padding-left:4px"><span class="s" style="--k:0.88">2007-06-01</span></div>
<div class="c" style="left:484px;width:65px;padding-left:4px"><span class="s" style="--k:0.88">2007-06-01</span></div>
<div class="c r" style="left:549px;width:69px;text-align:right;padding-right:2px"><span class="s" style="--k:0.88">237 000</span></div>
<div class="c r" style="left:618px;width:64px;text-align:right;padding-right:2px"><span class="s" style="--k:0.88">59 250</span></div>
<div class="c r" style="left:682px;width:71px;text-align:right;padding-right:2px"><span class="s" style="--k:0.88">296 250</span></div>
<div class="c" style="left:753px;width:60px;padding-left:4px"><span class="s" style="--k:0.88">HUF</span></div>
<div class="c" style="left:813px;width:73px;padding-left:4px"><span class="s" style="--k:0.88">Általános</span></div>
<div class="c" style="left:886px;width:69px;padding-left:4px"><span class="s" style="--k:0.88"></span></div>
<div class="c" style="left:955px;width:74px;padding-left:4px"><span class="s" style="--k:0.88">KP</span></div>
<div class="c" style="left:1029px;width:94px;padding-left:4px"><span class="s" style="--k:0.88"></span></div>
<div class="c" style="left:1123px;width:141px;padding-left:4px"><span class="s" style="--k:0.88"></span></div>
</div>
<div class="rh" style="top:301px;height:20px;"><span class="s" style="--k:0.88">8</span></div>
<div class="a" style="left:37px;top:321px;width:1215px;height:20px;background:#ffffff;overflow:hidden;line-height:14px">
<div class="c" style="left:0px;width:76px;padding-left:4px"><span class="s" style="--k:0.88">Normál</span></div>
<div class="c" style="left:76px;width:98px;padding-left:4px"><span class="s" style="--k:0.88">15-SZLA-AT/2007</span></div>
<div class="c" style="left:174px;width:71px;padding-left:4px"><span class="s" style="--k:0.88">1009</span></div>
<div class="c" style="left:245px;width:111px;padding-left:4px"><span class="s" style="--k:0.88">Csaba Kázmér</span></div>
<div class="c" style="left:356px;width:64px;padding-left:4px"><span class="s" style="--k:0.88">2007-08-14</span></div>
<div class="c" style="left:420px;width:64px;padding-left:4px"><span class="s" style="--k:0.88">2007-08-14</span></div>
<div class="c" style="left:484px;width:65px;padding-left:4px"><span class="s" style="--k:0.88">2007-08-22</span></div>
<div class="c r" style="left:549px;width:69px;text-align:right;padding-right:2px"><span class="s" style="--k:0.88">6 450</span></div>
<div class="c r" style="left:618px;width:64px;text-align:right;padding-right:2px"><span class="s" style="--k:0.88">1 612.5</span></div>
<div class="c r" style="left:682px;width:71px;text-align:right;padding-right:2px"><span class="s" style="--k:0.88">8 063</span></div>
<div class="c" style="left:753px;width:60px;padding-left:4px"><span class="s" style="--k:0.88">HUF</span></div>
<div class="c" style="left:813px;width:73px;padding-left:4px"><span class="s" style="--k:0.88">Általános</span></div>
<div class="c" style="left:886px;width:69px;padding-left:4px"><span class="s" style="--k:0.88"></span></div>
<div class="c" style="left:955px;width:74px;padding-left:4px"><span class="s" style="--k:0.88">AT</span></div>
<div class="c" style="left:1029px;width:94px;padding-left:4px"><span class="s" style="--k:0.88">1</span></div>
<div class="c" style="left:1123px;width:141px;padding-left:4px"><span class="s" style="--k:0.97">11111111-11111111</span></div>
</div>
<div class="rh" style="top:321px;height:20px;"><span class="s" style="--k:0.88">9</span></div>
<div class="a" style="left:37px;top:341px;width:1215px;height:20px;background:#f2f2f2;overflow:hidden;line-height:14px">
<div class="c" style="left:0px;width:76px;padding-left:4px"><span class="s" style="--k:0.88">Normál</span></div>
<div class="c" style="left:76px;width:98px;padding-left:4px"><span class="s" style="--k:0.88">15-SZLA-KP/2007</span></div>
<div class="c" style="left:174px;width:71px;padding-left:4px"><span class="s" style="--k:0.88">1008</span></div>
<div class="c" style="left:245px;width:111px;padding-left:4px"><span class="s" style="--k:0.88">Szabolcska Szabolcs</span></div>
<div class="c" style="left:356px;width:64px;padding-left:4px"><span class="s" style="--k:0.88">2007-06-01</span></div>
<div class="c" style="left:420px;width:64px;padding-left:4px"><span class="s" style="--k:0.88">2007-06-01</span></div>
<div class="c" style="left:484px;width:65px;padding-left:4px"><span class="s" style="--k:0.88">2007-06-01</span></div>
<div class="c r" style="left:549px;width:69px;text-align:right;padding-right:2px"><span class="s" style="--k:0.88">60 375</span></div>
<div class="c r" style="left:618px;width:64px;text-align:right;padding-right:2px"><span class="s" style="--k:0.88">15 093.75</span></div>
<div class="c r" style="left:682px;width:71px;text-align:right;padding-right:2px"><span class="s" style="--k:0.88">75 469</span></div>
<div class="c" style="left:753px;width:60px;padding-left:4px"><span class="s" style="--k:0.88">HUF</span></div>
<div class="c" style="left:813px;width:73px;padding-left:4px"><span class="s" style="--k:0.88">Általános</span></div>
<div class="c" style="left:886px;width:69px;padding-left:4px"><span class="s" style="--k:0.88"></span></div>
<div class="c" style="left:955px;width:74px;padding-left:4px"><span class="s" style="--k:0.88">KP</span></div>
<div class="c" style="left:1029px;width:94px;padding-left:4px"><span class="s" style="--k:0.88"></span></div>
<div class="c" style="left:1123px;width:141px;padding-left:4px"><span class="s" style="--k:0.88"></span></div>
</div>
<div class="rh" style="top:341px;height:20px;"><span class="s" style="--k:0.88">10</span></div>
<div class="a" style="left:37px;top:361px;width:1215px;height:20px;background:#ffffff;overflow:hidden;line-height:14px">
<div class="c" style="left:0px;width:76px;padding-left:4px"><span class="s" style="--k:0.88">Normál</span></div>
<div class="c" style="left:76px;width:98px;padding-left:4px"><span class="s" style="--k:0.88">16-SZLA-AT/2007</span></div>
<div class="c" style="left:174px;width:71px;padding-left:4px"><span class="s" style="--k:0.88">1009</span></div>
<div class="c" style="left:245px;width:111px;padding-left:4px"><span class="s" style="--k:0.88">Csaba Kázmér</span></div>
<div class="c" style="left:356px;width:64px;padding-left:4px"><span class="s" style="--k:0.88">2007-08-14</span></div>
<div class="c" style="left:420px;width:64px;padding-left:4px"><span class="s" style="--k:0.88">2007-08-14</span></div>
<div class="c" style="left:484px;width:65px;padding-left:4px"><span class="s" style="--k:0.88">2007-08-22</span></div>
<div class="c r" style="left:549px;width:69px;text-align:right;padding-right:2px"><span class="s" style="--k:0.88">2 400</span></div>
<div class="c r" style="left:618px;width:64px;text-align:right;padding-right:2px"><span class="s" style="--k:0.88">600</span></div>
<div class="c r" style="left:682px;width:71px;text-align:right;padding-right:2px"><span class="s" style="--k:0.88">3 000</span></div>
<div class="c" style="left:753px;width:60px;padding-left:4px"><span class="s" style="--k:0.88">HUF</span></div>
<div class="c" style="left:813px;width:73px;padding-left:4px"><span class="s" style="--k:0.88">Általános</span></div>
<div class="c" style="left:886px;width:69px;padding-left:4px"><span class="s" style="--k:0.88"></span></div>
<div class="c" style="left:955px;width:74px;padding-left:4px"><span class="s" style="--k:0.88">AT</span></div>
<div class="c" style="left:1029px;width:94px;padding-left:4px"><span class="s" style="--k:0.88">1</span></div>
<div class="c" style="left:1123px;width:141px;padding-left:4px"><span class="s" style="--k:0.97">11111111-11111111</span></div>
</div>
<div class="rh" style="top:361px;height:20px;"><span class="s" style="--k:0.88">11</span></div>
<div class="a" style="left:37px;top:381px;width:1215px;height:20px;background:#f2f2f2;overflow:hidden;line-height:14px">
<div class="c" style="left:0px;width:76px;padding-left:4px"><span class="s" style="--k:0.88">Normál</span></div>
<div class="c" style="left:76px;width:98px;padding-left:4px"><span class="s" style="--k:0.88">16-SZLA-KP/2007</span></div>
<div class="c" style="left:174px;width:71px;padding-left:4px"><span class="s" style="--k:0.88">1007</span></div>
<div class="c" style="left:245px;width:111px;padding-left:4px"><span class="s" style="--k:0.88">Nagy Hús Kft.</span></div>
<div class="c" style="left:356px;width:64px;padding-left:4px"><span class="s" style="--k:0.88">2007-07-31</span></div>
<div class="c" style="left:420px;width:64px;padding-left:4px"><span class="s" style="--k:0.88">2007-07-31</span></div>
<div class="c" style="left:484px;width:65px;padding-left:4px"><span class="s" style="--k:0.88">2007-07-31</span></div>
<div class="c r" style="left:549px;width:69px;text-align:right;padding-right:2px"><span class="s" style="--k:0.88">753 375</span></div>
<div class="c r" style="left:618px;width:64px;text-align:right;padding-right:2px"><span class="s" style="--k:0.88">188 343.75</span></div>
<div class="c r" style="left:682px;width:71px;text-align:right;padding-right:2px"><span class="s" style="--k:0.88">941 719</span></div>
<div class="c" style="left:753px;width:60px;padding-left:4px"><span class="s" style="--k:0.88">HUF</span></div>
<div class="c" style="left:813px;width:73px;padding-left:4px"><span class="s" style="--k:0.88">Általános</span></div>
<div class="c" style="left:886px;width:69px;padding-left:4px"><span class="s" style="--k:0.88"></span></div>
<div class="c" style="left:955px;width:74px;padding-left:4px"><span class="s" style="--k:0.88">KP</span></div>
<div class="c" style="left:1029px;width:94px;padding-left:4px"><span class="s" style="--k:0.88">1</span></div>
<div class="c" style="left:1123px;width:141px;padding-left:4px"><span class="s" style="--k:0.97">11111111-11111111</span></div>
</div>
<div class="rh" style="top:381px;height:20px;"><span class="s" style="--k:0.88">12</span></div>
<div class="a" style="left:37px;top:401px;width:1215px;height:20px;background:#ffffff;overflow:hidden;line-height:14px">
<div class="c" style="left:0px;width:76px;padding-left:4px"><span class="s" style="--k:0.88">Normál</span></div>
<div class="c" style="left:76px;width:98px;padding-left:4px"><span class="s" style="--k:0.88">17-SZLA-AT/2007</span></div>
<div class="c" style="left:174px;width:71px;padding-left:4px"><span class="s" style="--k:0.88">1011</span></div>
<div class="c" style="left:245px;width:111px;padding-left:4px"><span class="s" style="--k:0.88">Király Sándorné</span></div>
<div class="c" style="left:356px;width:64px;padding-left:4px"><span class="s" style="--k:0.88">2007-09-13</span></div>
<div class="c" style="left:420px;width:64px;padding-left:4px"><span class="s" style="--k:0.88">2007-08-11</span></div>
<div class="c" style="left:484px;width:65px;padding-left:4px"><span class="s" style="--k:0.88">2007-08-23</span></div>
<div class="c r" style="left:549px;width:69px;text-align:right;padding-right:2px"><span class="s" style="--k:0.88">2 400</span></div>
<div class="c r" style="left:618px;width:64px;text-align:right;padding-right:2px"><span class="s" style="--k:0.88">600</span></div>
<div class="c r" style="left:682px;width:71px;text-align:right;padding-right:2px"><span class="s" style="--k:0.88">3 000</span></div>
<div class="c" style="left:753px;width:60px;padding-left:4px"><span class="s" style="--k:0.88">HUF</span></div>
<div class="c" style="left:813px;width:73px;padding-left:4px"><span class="s" style="--k:0.88">Általános</span></div>
<div class="c" style="left:886px;width:69px;padding-left:4px"><span class="s" style="--k:0.88"></span></div>
<div class="c" style="left:955px;width:74px;padding-left:4px"><span class="s" style="--k:0.88">AT</span></div>
<div class="c" style="left:1029px;width:94px;padding-left:4px"><span class="s" style="--k:0.88">1</span></div>
<div class="c" style="left:1123px;width:141px;padding-left:4px"><span class="s" style="--k:0.97">11111111-11111111</span></div>
</div>
<div class="rh" style="top:401px;height:20px;"><span class="s" style="--k:0.88">13</span></div>
<div class="a" style="left:37px;top:421px;width:1215px;height:20px;background:#f2f2f2;overflow:hidden;line-height:14px">
<div class="c" style="left:0px;width:76px;padding-left:4px"><span class="s" style="--k:0.88">Normál</span></div>
<div class="c" style="left:76px;width:98px;padding-left:4px"><span class="s" style="--k:0.88">17-SZLA-KP/2007</span></div>
<div class="c" style="left:174px;width:71px;padding-left:4px"><span class="s" style="--k:0.88">1008</span></div>
<div class="c" style="left:245px;width:111px;padding-left:4px"><span class="s" style="--k:0.88">Szabolcska Szabolcs</span></div>
<div class="c" style="left:356px;width:64px;padding-left:4px"><span class="s" style="--k:0.88">2007-08-13</span></div>
<div class="c" style="left:420px;width:64px;padding-left:4px"><span class="s" style="--k:0.88">2007-08-10</span></div>
<div class="c" style="left:484px;width:65px;padding-left:4px"><span class="s" style="--k:0.88">2007-08-20</span></div>
<div class="c r" style="left:549px;width:69px;text-align:right;padding-right:2px"><span class="s" style="--k:0.88">35 100</span></div>
<div class="c r" style="left:618px;width:64px;text-align:right;padding-right:2px"><span class="s" style="--k:0.88">8 775</span></div>
<div class="c r" style="left:682px;width:71px;text-align:right;padding-right:2px"><span class="s" style="--k:0.88">43 875</span></div>
<div class="c" style="left:753px;width:60px;padding-left:4px"><span class="s" style="--k:0.88">HUF</span></div>
<div class="c" style="left:813px;width:73px;padding-left:4px"><span class="s" style="--k:0.88">Általános</span></div>
<div class="c" style="left:886px;width:69px;padding-left:4px"><span class="s" style="--k:0.88"></span></div>
<div class="c" style="left:955px;width:74px;padding-left:4px"><span class="s" style="--k:0.88">KP</span></div>
<div class="c" style="left:1029px;width:94px;padding-left:4px"><span class="s" style="--k:0.88">1</span></div>
<div class="c" style="left:1123px;width:141px;padding-left:4px"><span class="s" style="--k:0.97">11111111-11111111</span></div>
</div>
<div class="rh" style="top:421px;height:20px;"><span class="s" style="--k:0.88">14</span></div>
<div class="a" style="left:37px;top:441px;width:1215px;height:20px;background:#ffffff;overflow:hidden;line-height:14px">
<div class="c" style="left:0px;width:76px;padding-left:4px"><span class="s" style="--k:0.88">Normál</span></div>
<div class="c" style="left:76px;width:98px;padding-left:4px"><span class="s" style="--k:0.88">18-SZLA-AT/2007</span></div>
<div class="c" style="left:174px;width:71px;padding-left:4px"><span class="s" style="--k:0.88">1011</span></div>
<div class="c" style="left:245px;width:111px;padding-left:4px"><span class="s" style="--k:0.88">Király Sándorné</span></div>
<div class="c" style="left:356px;width:64px;padding-left:4px"><span class="s" style="--k:0.88">2007-09-13</span></div>
<div class="c" style="left:420px;width:64px;padding-left:4px"><span class="s" style="--k:0.88">2007-08-11</span></div>
<div class="c" style="left:484px;width:65px;padding-left:4px"><span class="s" style="--k:0.88">2007-08-23</span></div>
<div class="c r" style="left:549px;width:69px;text-align:right;padding-right:2px"><span class="s" style="--k:0.88">5 700</span></div>
<div class="c r" style="left:618px;width:64px;text-align:right;padding-right:2px"><span class="s" style="--k:0.88">1 425</span></div>
<div class="c r" style="left:682px;width:71px;text-align:right;padding-right:2px"><span class="s" style="--k:0.88">7 125</span></div>
<div class="c" style="left:753px;width:60px;padding-left:4px"><span class="s" style="--k:0.88">HUF</span></div>
<div class="c" style="left:813px;width:73px;padding-left:4px"><span class="s" style="--k:0.88">Általános</span></div>
<div class="c" style="left:886px;width:69px;padding-left:4px"><span class="s" style="--k:0.88"></span></div>
<div class="c" style="left:955px;width:74px;padding-left:4px"><span class="s" style="--k:0.88">AT</span></div>
<div class="c" style="left:1029px;width:94px;padding-left:4px"><span class="s" style="--k:0.88">1</span></div>
<div class="c" style="left:1123px;width:141px;padding-left:4px"><span class="s" style="--k:0.97">11111111-11111111</span></div>
</div>
<div class="rh" style="top:441px;height:20px;"><span class="s" style="--k:0.88">15</span></div>
<div class="a" style="left:37px;top:461px;width:1215px;height:20px;background:#f2f2f2;overflow:hidden;line-height:14px">
<div class="c" style="left:0px;width:76px;padding-left:4px"><span class="s" style="--k:0.88">Normál</span></div>
<div class="c" style="left:76px;width:98px;padding-left:4px"><span class="s" style="--k:0.88">18-SZLA-KP/2007</span></div>
<div class="c" style="left:174px;width:71px;padding-left:4px"><span class="s" style="--k:0.88">1007</span></div>
<div class="c" style="left:245px;width:111px;padding-left:4px"><span class="s" style="--k:0.88">Nagy Hús Kft.</span></div>
<div class="c" style="left:356px;width:64px;padding-left:4px"><span class="s" style="--k:0.88">2007-08-13</span></div>
<div class="c" style="left:420px;width:64px;padding-left:4px"><span class="s" style="--k:0.88">2007-08-10</span></div>
<div class="c" style="left:484px;width:65px;padding-left:4px"><span class="s" style="--k:0.88">2007-08-20</span></div>
<div class="c r" style="left:549px;width:69px;text-align:right;padding-right:2px"><span class="s" style="--k:0.88">11 400</span></div>
<div class="c r" style="left:618px;width:64px;text-align:right;padding-right:2px"><span class="s" style="--k:0.88">2 850</span></div>
<div class="c r" style="left:682px;width:71px;text-align:right;padding-right:2px"><span class="s" style="--k:0.88">14 250</span></div>
<div class="c" style="left:753px;width:60px;padding-left:4px"><span class="s" style="--k:0.88">HUF</span></div>
<div class="c" style="left:813px;width:73px;padding-left:4px"><span class="s" style="--k:0.88">Általános</span></div>
<div class="c" style="left:886px;width:69px;padding-left:4px"><span class="s" style="--k:0.88"></span></div>
<div class="c" style="left:955px;width:74px;padding-left:4px"><span class="s" style="--k:0.88">KP</span></div>
<div class="c" style="left:1029px;width:94px;padding-left:4px"><span class="s" style="--k:0.88">1</span></div>
<div class="c" style="left:1123px;width:141px;padding-left:4px"><span class="s" style="--k:0.97">11111111-11111111</span></div>
</div>
<div class="rh" style="top:461px;height:20px;"><span class="s" style="--k:0.88">16</span></div>
<div class="a" style="left:37px;top:481px;width:1215px;height:20px;background:#ffffff;overflow:hidden;line-height:14px">
<div class="c" style="left:0px;width:76px;padding-left:4px"><span class="s" style="--k:0.88">Normál</span></div>
<div class="c" style="left:76px;width:98px;padding-left:4px"><span class="s" style="--k:0.88">19-SZLA-AT/2007</span></div>
<div class="c" style="left:174px;width:71px;padding-left:4px"><span class="s" style="--k:0.88">1006</span></div>
<div class="c" style="left:245px;width:111px;padding-left:4px"><span class="s" style="--k:0.88">Szabó Kázmér</span></div>
<div class="c" style="left:356px;width:64px;padding-left:4px"><span class="s" style="--k:0.88">2007-09-13</span></div>
<div class="c" style="left:420px;width:64px;padding-left:4px"><span class="s" style="--k:0.88">2007-08-13</span></div>
<div class="c" style="left:484px;width:65px;padding-left:4px"><span class="s" style="--k:0.88">2007-08-23</span></div>
<div class="c r" style="left:549px;width:69px;text-align:right;padding-right:2px"><span class="s" style="--k:0.88">12 375</span></div>
<div class="c r" style="left:618px;width:64px;text-align:right;padding-right:2px"><span class="s" style="--k:0.88">3 093.75</span></div>
<div class="c r" style="left:682px;width:71px;text-align:right;padding-right:2px"><span class="s" style="--k:0.88">15 469</span></div>
<div class="c" style="left:753px;width:60px;padding-left:4px"><span class="s" style="--k:0.88">HUF</span></div>
<div class="c" style="left:813px;width:73px;padding-left:4px"><span class="s" style="--k:0.88">Általános</span></div>
<div class="c" style="left:886px;width:69px;padding-left:4px"><span class="s" style="--k:0.88"></span></div>
<div class="c" style="left:955px;width:74px;padding-left:4px"><span class="s" style="--k:0.88">AT</span></div>
<div class="c" style="left:1029px;width:94px;padding-left:4px"><span class="s" style="--k:0.88">1</span></div>
<div class="c" style="left:1123px;width:141px;padding-left:4px"><span class="s" style="--k:0.97">11111111-11111111</span></div>
</div>
<div class="rh" style="top:481px;height:20px;"><span class="s" style="--k:0.88">17</span></div>
<div class="a" style="left:37px;top:501px;width:1215px;height:20px;background:#f2f2f2;overflow:hidden;line-height:14px">
<div class="c" style="left:0px;width:76px;padding-left:4px"><span class="s" style="--k:0.88">Normál</span></div>
<div class="c" style="left:76px;width:98px;padding-left:4px"><span class="s" style="--k:0.88">19-SZLA-KP/2007</span></div>
<div class="c" style="left:174px;width:71px;padding-left:4px"><span class="s" style="--k:0.88">1004</span></div>
<div class="c" style="left:245px;width:111px;padding-left:4px"><span class="s" style="--k:0.88">Kis Jolán</span></div>
<div class="c" style="left:356px;width:64px;padding-left:4px"><span class="s" style="--k:0.88">2007-08-13</span></div>
<div class="c" style="left:420px;width:64px;padding-left:4px"><span class="s" style="--k:0.88">2007-08-10</span></div>
<div class="c" style="left:484px;width:65px;padding-left:4px"><span class="s" style="--k:0.88">2007-08-20</span></div>
<div class="c r" style="left:549px;width:69px;text-align:right;padding-right:2px"><span class="s" style="--k:0.88">10 800</span></div>
<div class="c r" style="left:618px;width:64px;text-align:right;padding-right:2px"><span class="s" style="--k:0.88">2 700</span></div>
<div class="c r" style="left:682px;width:71px;text-align:right;padding-right:2px"><span class="s" style="--k:0.88">13 500</span></div>
<div class="c" style="left:753px;width:60px;padding-left:4px"><span class="s" style="--k:0.88">HUF</span></div>
<div class="c" style="left:813px;width:73px;padding-left:4px"><span class="s" style="--k:0.88">Általános</span></div>
<div class="c" style="left:886px;width:69px;padding-left:4px"><span class="s" style="--k:0.88"></span></div>
<div class="c" style="left:955px;width:74px;padding-left:4px"><span class="s" style="--k:0.88">KP</span></div>
<div class="c" style="left:1029px;width:94px;padding-left:4px"><span class="s" style="--k:0.88">1</span></div>
<div class="c" style="left:1123px;width:141px;padding-left:4px"><span class="s" style="--k:0.97">11111111-11111111</span></div>
</div>
<div class="rh" style="top:501px;height:20px;"><span class="s" style="--k:0.88">18</span></div>
<div class="a" style="left:37px;top:521px;width:1215px;height:20px;background:#ffffff;overflow:hidden;line-height:14px">
<div class="c" style="left:0px;width:76px;padding-left:4px"><span class="s" style="--k:0.88">Normál</span></div>
<div class="c" style="left:76px;width:98px;padding-left:4px"><span class="s" style="--k:0.88">1-SZLA-AT/2007</span></div>
<div class="c" style="left:174px;width:71px;padding-left:4px"><span class="s" style="--k:0.88">1002</span></div>
<div class="c" style="left:245px;width:111px;padding-left:4px"><span class="s" style="--k:0.88">Nagy Nándor</span></div>
<div class="c" style="left:356px;width:64px;padding-left:4px"><span class="s" style="--k:0.88">2007-04-13</span></div>
<div class="c" style="left:420px;width:64px;padding-left:4px"><span class="s" style="--k:0.88">2007-04-13</span></div>
<div class="c" style="left:484px;width:65px;padding-left:4px"><span class="s" style="--k:0.88">2007-04-25</span></div>
<div class="c r" style="left:549px;width:69px;text-align:right;padding-right:2px"><span class="s" style="--k:0.88">600</span></div>
<div class="c r" style="left:618px;width:64px;text-align:right;padding-right:2px"><span class="s" style="--k:0.88">150</span></div>
<div class="c r" style="left:682px;width:71px;text-align:right;padding-right:2px"><span class="s" style="--k:0.88">750</span></div>
<div class="c" style="left:753px;width:60px;padding-left:4px"><span class="s" style="--k:0.88">HUF</span></div>
<div class="c" style="left:813px;width:73px;padding-left:4px"><span class="s" style="--k:0.88">Általános</span></div>
<div class="c" style="left:886px;width:69px;padding-left:4px"><span class="s" style="--k:0.88"></span></div>
<div class="c" style="left:955px;width:74px;padding-left:4px"><span class="s" style="--k:0.88">AT</span></div>
<div class="c" style="left:1029px;width:94px;padding-left:4px"><span class="s" style="--k:0.88"></span></div>
<div class="c" style="left:1123px;width:141px;padding-left:4px"><span class="s" style="--k:0.88"></span></div>
</div>
<div class="rh" style="top:521px;height:20px;"><span class="s" style="--k:0.88">19</span></div>
<div class="a" style="left:37px;top:541px;width:1215px;height:20px;background:#f2f2f2;overflow:hidden;line-height:14px">
<div class="c" style="left:0px;width:76px;padding-left:4px"><span class="s" style="--k:0.88">Normál</span></div>
<div class="c" style="left:76px;width:98px;padding-left:4px"><span class="s" style="--k:0.88">1-SZLA-KP/2007</span></div>
<div class="c" style="left:174px;width:71px;padding-left:4px"><span class="s" style="--k:0.88">1004</span></div>
<div class="c" style="left:245px;width:111px;padding-left:4px"><span class="s" style="--k:0.88">Kis Jolán</span></div>
<div class="c" style="left:356px;width:64px;padding-left:4px"><span class="s" style="--k:0.88">2007-04-16</span></div>
<div class="c" style="left:420px;width:64px;padding-left:4px"><span class="s" style="--k:0.88">2007-04-16</span></div>
<div class="c" style="left:484px;width:65px;padding-left:4px"><span class="s" style="--k:0.88">2007-04-16</span></div>
<div class="c r" style="left:549px;width:69px;text-align:right;padding-right:2px"><span class="s" style="--k:0.88">163 500</span></div>
<div class="c r" style="left:618px;width:64px;text-align:right;padding-right:2px"><span class="s" style="--k:0.88">40 875</span></div>
<div class="c r" style="left:682px;width:71px;text-align:right;padding-right:2px"><span class="s" style="--k:0.88">204 375</span></div>
<div class="c" style="left:753px;width:60px;padding-left:4px"><span class="s" style="--k:0.88">HUF</span></div>
<div class="c" style="left:813px;width:73px;padding-left:4px"><span class="s" style="--k:0.88">Általános</span></div>
<div class="c" style="left:886px;width:69px;padding-left:4px"><span class="s" style="--k:0.88"></span></div>
<div class="c" style="left:955px;width:74px;padding-left:4px"><span class="s" style="--k:0.88">KP</span></div>
<div class="c" style="left:1029px;width:94px;padding-left:4px"><span class="s" style="--k:0.88"></span></div>
<div class="c" style="left:1123px;width:141px;padding-left:4px"><span class="s" style="--k:0.88"></span></div>
</div>
<div class="rh" style="top:541px;height:20px;"><span class="s" style="--k:0.88">20</span></div>
<div class="a" style="left:37px;top:561px;width:1215px;height:20px;background:#ffffff;overflow:hidden;line-height:14px">
<div class="c" style="left:0px;width:76px;padding-left:4px"><span class="s" style="--k:0.88">Normál</span></div>
<div class="c" style="left:76px;width:98px;padding-left:4px"><span class="s" style="--k:0.88">20-SZLA-AT/2007</span></div>
<div class="c" style="left:174px;width:71px;padding-left:4px"><span class="s" style="--k:0.88">1006</span></div>
<div class="c" style="left:245px;width:111px;padding-left:4px"><span class="s" style="--k:0.88">Szabó Kázmér</span></div>
<div class="c" style="left:356px;width:64px;padding-left:4px"><span class="s" style="--k:0.88">2007-09-13</span></div>
<div class="c" style="left:420px;width:64px;padding-left:4px"><span class="s" style="--k:0.88">2007-08-13</span></div>
<div class="c" style="left:484px;width:65px;padding-left:4px"><span class="s" style="--k:0.88">2007-08-23</span></div>
<div class="c r" style="left:549px;width:69px;text-align:right;padding-right:2px"><span class="s" style="--k:0.88">4 800</span></div>
<div class="c r" style="left:618px;width:64px;text-align:right;padding-right:2px"><span class="s" style="--k:0.88">1 200</span></div>
<div class="c r" style="left:682px;width:71px;text-align:right;padding-right:2px"><span class="s" style="--k:0.88">6 000</span></div>
<div class="c" style="left:753px;width:60px;padding-left:4px"><span class="s" style="--k:0.88">HUF</span></div>
<div class="c" style="left:813px;width:73px;padding-left:4px"><span class="s" style="--k:0.88">Általános</span></div>
<div class="c" style="left:886px;width:69px;padding-left:4px"><span class="s" style="--k:0.88"></span></div>
<div class="c" style="left:955px;width:74px;padding-left:4px"><span class="s" style="--k:0.88">AT</span></div>
<div class="c" style="left:1029px;width:94px;padding-left:4px"><span class="s" style="--k:0.88">1</span></div>
<div class="c" style="left:1123px;width:141px;padding-left:4px"><span class="s" style="--k:0.97">11111111-11111111</span></div>
</div>
<div class="rh" style="top:561px;height:20px;"><span class="s" style="--k:0.88">21</span></div>
<div class="a" style="left:37px;top:581px;width:1215px;height:3px;background:#f2f2f2;overflow:hidden;line-height:14px">
<div class="c" style="left:0px;width:76px;padding-left:4px"><span class="s" style="--k:0.88">Normál</span></div>
<div class="c" style="left:76px;width:98px;padding-left:4px"><span class="s" style="--k:0.88">20-SZLA-KP/2007</span></div>
<div class="c" style="left:174px;width:71px;padding-left:4px"><span class="s" style="--k:0.88">1007</span></div>
<div class="c" style="left:245px;width:111px;padding-left:4px"><span class="s" style="--k:0.88">Nagy Hús Kft.</span></div>
<div class="c" style="left:356px;width:64px;padding-left:4px"><span class="s" style="--k:0.88">2007-09-13</span></div>
<div class="c" style="left:420px;width:64px;padding-left:4px"><span class="s" style="--k:0.88">2007-08-13</span></div>
<div class="c" style="left:484px;width:65px;padding-left:4px"><span class="s" style="--k:0.88">2007-08-23</span></div>
<div class="c r" style="left:549px;width:69px;text-align:right;padding-right:2px"><span class="s" style="--k:0.88">6 000</span></div>
<div class="c r" style="left:618px;width:64px;text-align:right;padding-right:2px"><span class="s" style="--k:0.88">1 500</span></div>
<div class="c r" style="left:682px;width:71px;text-align:right;padding-right:2px"><span class="s" style="--k:0.88">7 500</span></div>
<div class="c" style="left:753px;width:60px;padding-left:4px"><span class="s" style="--k:0.88">HUF</span></div>
<div class="c" style="left:813px;width:73px;padding-left:4px"><span class="s" style="--k:0.88">Általános</span></div>
<div class="c" style="left:886px;width:69px;padding-left:4px"><span class="s" style="--k:0.88"></span></div>
<div class="c" style="left:955px;width:74px;padding-left:4px"><span class="s" style="--k:0.88">KP</span></div>
<div class="c" style="left:1029px;width:94px;padding-left:4px"><span class="s" style="--k:0.88">1</span></div>
<div class="c" style="left:1123px;width:141px;padding-left:4px"><span class="s" style="--k:0.97">11111111-11111111</span></div>
</div>
<div class="rh" style="top:581px;height:3px;border-bottom:none"></div>
<div class="a dither" style="left:1252px;top:141px;width:15px;height:443px"></div>
<div class="btn" style="left:1252px;top:141px;width:15px;height:15px;box-shadow:none"><svg class="a" style="left:2px;top:4px" width="9" height="5"><path d="M0 4 L8 4 L4 0 Z" fill="#000"/></svg></div>
<div class="btn" style="left:1252px;top:156px;width:15px;height:181px;box-shadow:none"></div>
<div class="btn" style="left:1252px;top:569px;width:15px;height:15px;box-shadow:none"><svg class="a" style="left:2px;top:4px" width="9" height="5"><path d="M0 0 L8 0 L4 4 Z" fill="#000"/></svg></div>
<div class="a dither" style="left:7px;top:584px;width:1245px;height:15px"></div>
<div class="btn" style="left:7px;top:584px;width:15px;height:15px;box-shadow:none"><svg class="a" style="left:3px;top:3px" width="5" height="8"><path d="M4 0 L4 7 L0 3.5 Z" fill="#000"/></svg></div>
<div class="btn" style="left:22px;top:584px;width:415px;height:15px;box-shadow:none"></div>
<div class="btn" style="left:1237px;top:584px;width:15px;height:15px;box-shadow:none"><svg class="a" style="left:5px;top:2px" width="5" height="9"><path d="M0 0 L0 8 L4 4 Z" fill="#000"/></svg></div>
<div class="a" style="left:1252px;top:584px;width:15px;height:15px;background:#aca8d8"></div>
<div class="btn" style="left:327px;top:602px;width:148px;height:24px"><span class="s" style="--k:0.8484">Stornó</span></div>
<div class="btn" style="left:799px;top:602px;width:148px;height:24px"><span class="s" style="--k:0.88">Helyesbítés</span></div>
<div class="a" style="left:6px;top:635px;width:1263px;height:76px;border:1px solid #dcd9f8"></div>
<div class="a" style="left:5px;top:634px;width:1263px;height:76px;border:1px solid #6a65ac"></div>
<div class="t" style="left:13px;top:628px;"><span class="s" style="--k:0.8932;background:#aca8d8;padding:0 1px">Összesített értékek pénznemenként</span></div>
<div class="t r" style="left:0;top:646px;width:446px;text-align:right"><span class="s" style="--k:0.8696">Összes nettó érték</span></div>
<div class="t r" style="left:0;top:646px;width:853px;text-align:right"><span class="s" style="--k:0.8696">Összes adó érték</span></div>
<div class="t r" style="left:0;top:646px;width:1259px;text-align:right"><span class="s" style="--k:0.8696">Összes bruttó érték</span></div>
<div class="t" style="left:16px;top:664px"><span class="s" style="--k:0.88">HUF</span></div>
<div class="t" style="left:16px;top:684px"><span class="s" style="--k:0.88">EUR</span></div>
<div class="inp r" style="left:39px;top:661px;width:406px;height:18px"><span class="s" style="--k:0.88">4295165</span></div>
<div class="inp r" style="left:445px;top:661px;width:407px;height:18px"><span class="s" style="--k:0.88">1073791.25</span></div>
<div class="inp r" style="left:852px;top:661px;width:405px;height:18px"><span class="s" style="--k:0.88">5368961</span></div>
<div class="inp r" style="left:39px;top:681px;width:406px;height:18px"><span class="s" style="--k:0.88">60</span></div>
<div class="inp r" style="left:445px;top:681px;width:407px;height:18px"><span class="s" style="--k:0.88">15</span></div>
<div class="inp r" style="left:852px;top:681px;width:405px;height:18px"><span class="s" style="--k:0.88">75</span></div>
<div class="t" style="left:6px;top:711px;"><span class="s" style="--k:0.8737">Csak a nem nyomtatott számlák?</span></div>
<div class="chk" style="left:192px;top:712px"><svg class="a" style="left:0;top:0" width="10" height="10"><path d="M1.5 3.5 L3.8 7 L8.2 1.5" fill="none" stroke="#000" stroke-width="1.9"/></svg></div>
<div class="t" style="left:240px;top:711px;"><span class="s" style="--k:0.9029">Csak a ma kiállítottak?</span></div>
<div class="chk" style="left:379px;top:712px"></div>
<div class="t" style="left:429px;top:711px;"><span class="s" style="--k:0.8932">Csak összesítők?</span></div>
<div class="chk" style="left:544px;top:712px"></div>
<div class="t" style="left:860px;top:728px;"><span class="s" style="--k:0.8863">Karakteres nyomtató: <span style="color:#1a1aa8">EPSON KOMPATIBILIS</span>, Számla lap típus: <span style="color:#2c9c3c">A4</span>, Példányszám: <span style="color:#d0102a;font-weight:bold;font-size:13px">2</span></span></div>
<div class="btn" style="left:31px;top:743px;width:111px;height:24px;"><span class="s" style="--k:0.8803">Előzetesen megtekint</span></div>
<div class="btn" style="left:268px;top:743px;width:98px;height:24px;"><span class="s" style="--k:0.8813">Csekket megtekint</span></div>
<div class="btn" style="left:368px;top:743px;width:89px;height:24px;"><span class="s" style="--k:0.8727">Csekket nyomtat</span></div>
<div class="t" style="left:644px;top:748px;"><span class="s" style="--k:0.8627">Másolat példányszám:</span></div>
<div class="a" style="left:748px;top:746px;width:79px;height:18px;background:#fcdcaa;border-top:1px solid #0c0a2c;border-left:2px solid #0c0a2c;border-right:1px solid #dcd9f8;border-bottom:1px solid #dcd9f8;line-height:16px;padding-left:1px"><span class="s" style="--k:0.88">1</span></div>
<div class="btn" style="left:953px;top:743px;width:80px;height:24px"><span class="s" style="--k:0.88">Nyomtat</span></div>
<div class="btn" style="left:1159px;top:743px;width:84px;height:24px"><span class="s" style="--k:0.88">Összes nyomtat</span></div>
<div class="sp" style="left:4px;width:44px"><span class="s" style="--k:0.8946">-v1.91X</span></div>
<div class="sp" style="left:50px;width:127px"><span class="s" style="--k:0.9127">46 / 48</span></div>
<div class="sp" style="left:180px;width:23px"><div class="a" style="left:1px;top:1px;width:10px;height:10px;border-radius:50%;background:#fff;border-left:1.2px solid #000;border-top:1.2px solid #000"></div></div>
<div class="sp" style="left:205px;width:1050px;padding-left:1px"><span class="s" style="--k:0.8935">A bizonylat egyedi száma</span></div>
<svg class="a" style="left:1258px;top:776px" width="15" height="15"><path d="M14 1 L1 14 M14 5 L5 14 M14 9 L9 14" stroke="#4a4590" stroke-width="1.4"/><path d="M14 2.5 L2.5 14 M14 6.5 L6.5 14 M14 10.5 L10.5 14" stroke="#e8e6fc" stroke-width="1"/></svg>
</body></html>
